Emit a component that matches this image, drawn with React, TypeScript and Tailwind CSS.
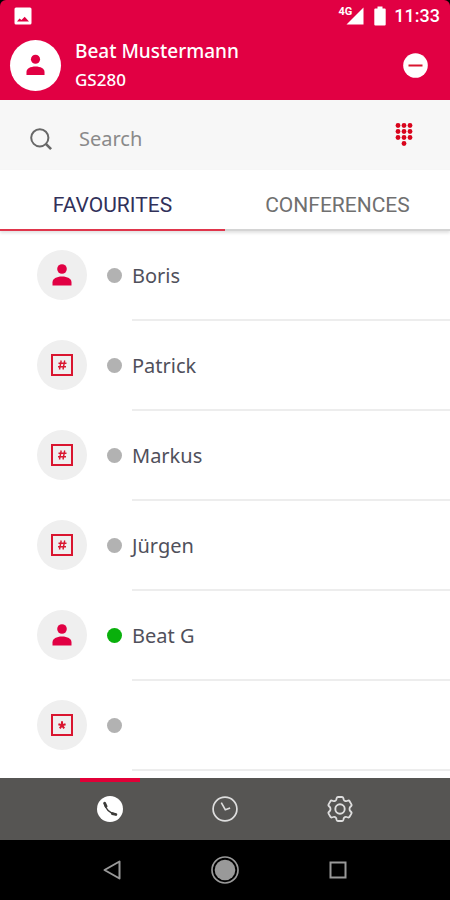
import { useState } from 'react';

type Contact = {
  id: number;
  name: string;
  kind: 'person' | 'hash' | 'star';
  online: boolean;
};

const contacts: Contact[] = [
  { id: 1, name: 'Boris', kind: 'person', online: false },
  { id: 2, name: 'Patrick', kind: 'hash', online: false },
  { id: 3, name: 'Markus', kind: 'hash', online: false },
  { id: 4, name: 'Jürgen', kind: 'hash', online: false },
  { id: 5, name: 'Beat G', kind: 'person', online: true },
  { id: 6, name: '', kind: 'star', online: false },
];

function PersonIcon({ className }: { className?: string }) {
  return (
    <svg viewBox="0 0 20 22" className={className} fill="currentColor" aria-hidden="true">
      <circle cx="10" cy="5" r="4.8" />
      <path d="M0.5 21.5v-3.2c0-3.6 4-5.8 9.500-5.800s9.500 2.200 9.500 5.800v3.200z" />
    </svg>
  );
}

function KeyIcon({ kind }: { kind: 'hash' | 'star' }) {
  return (
    <svg viewBox="0 0 22 22" className="h-[22px] w-[22px] text-[#d9152f]" fill="none" stroke="currentColor" aria-hidden="true">
      <rect x="1" y="1" width="20" height="20" strokeWidth="2" />
      {kind === 'hash' ? (
        <path d="M10.200 6.500l-1.700 9M13.700 6.500l-1.700 9M7.500 9.300h8M7 12.700h8" strokeWidth="1.400" />
      ) : (
        <path d="M11 7.300v4M7.400 10.200l3.600 1.100M14.600 10.200l-3.600 1.100M8.800 14.300l2.200-3M13.200 14.300l-2.200-3" strokeWidth="2" />
      )}
    </svg>
  );
}

function StatusBar() {
  return (
    <div className="flex h-8 items-center justify-between pl-[14px] pr-[10px]">
      <svg viewBox="0 0 18 18" className="h-[18px] w-[18px]" aria-hidden="true">
        <rect x="0.500" y="0.500" width="17" height="17" rx="1.500" fill="#fff" />
        <path d="M3 14.500l2.500-3 2 1.600 3.200-3.300 4.300 4.700z" fill="#e10043" />
      </svg>
      <div className="flex items-center text-white">
        <span className="-mr-[6px] self-start font-['Roboto'] text-[11px] font-bold leading-3">4G</span>
        <svg viewBox="0 0 18 18" className="h-[18px] w-[18px]" fill="currentColor" aria-hidden="true">
          <path d="M17.500 0.500v17h-17z" />
        </svg>
        <svg viewBox="0 0 12 20" className="ml-[10px] h-5 w-3" fill="currentColor" aria-hidden="true">
          <path d="M3.500 0.500h5v2h2.200q1 0 1 1v15q0 1-1 1h-9.400q-1 0-1-1v-15q0-1 1-1h2.200z" />
        </svg>
        <span className="ml-2 font-['Roboto'] text-[18px] font-medium leading-5">11:33</span>
      </div>
    </div>
  );
}

function Header() {
  return (
    <header className="bg-black">
      <div className="h-[100px] rounded-t-md bg-[#e10043]">
        <StatusBar />
        <div className="flex items-center pl-[10px] pr-[22px] pt-1">
          <div className="flex h-[51px] w-[51px] items-center justify-center rounded-full bg-white text-[#e10043]">
            <PersonIcon className="h-[22px] w-[19px]" />
          </div>
          <div className="ml-[14px] flex-1 text-white">
            <h1 className="text-[19px] font-medium leading-[30px]">Beat Mustermann</h1>
            <p className="text-[17px] font-medium leading-7">GS280</p>
          </div>
          <button type="button" aria-label="Status" className="h-[25px] w-[25px]">
            <svg viewBox="0 0 25 25" className="h-full w-full" aria-hidden="true">
              <circle cx="12.500" cy="12.500" r="12.300" fill="#fff" />
              <path d="M5.500 12.500h14" stroke="#d9152f" strokeWidth="2" />
            </svg>
          </button>
        </div>
      </div>
    </header>
  );
}

function SearchBar() {
  return (
    <div className="flex h-[70px] items-center bg-[#f7f7f7] pl-[30px] pr-9 pt-2">
      <svg viewBox="0 0 22 22" className="h-[22px] w-[22px] text-[#686868]" fill="none" stroke="currentColor" aria-hidden="true">
        <circle cx="9.800" cy="9.800" r="8.600" strokeWidth="2" />
        <path d="M15.800 15.800l5.300 5.300" strokeWidth="2.600" />
      </svg>
      <input
        type="search"
        aria-label="Search"
        placeholder="Search"
        className="ml-[27px] min-w-0 flex-1 bg-transparent text-[20px] leading-7 text-[#464650] outline-none placeholder:text-[#8a8a8a]"
      />
      <button type="button" aria-label="Dialpad" className="-mt-2 h-6 w-5">
        <svg viewBox="0 0 20 24" className="h-full w-full" fill="#d9041c" aria-hidden="true">
          {[2.5, 8.5, 14.5].map((y) =>
            [4, 10, 16].map((x) => <circle key={`${x}-${y}`} cx={x} cy={y} r="2.400" />)
          )}
          <circle cx="10" cy="20.500" r="2.400" />
        </svg>
      </button>
    </div>
  );
}

function ContactRow({ contact }: { contact: Contact }) {
  return (
    <li className="flex h-[90px] pl-[37px]">
      <div className="flex h-[88px] items-center">
        <div className="flex h-[50px] w-[50px] items-center justify-center rounded-full bg-[#efefef] text-[#e10043]">
          {contact.kind === 'person' ? <PersonIcon className="h-[22px] w-5" /> : <KeyIcon kind={contact.kind} />}
        </div>
        <span className={`ml-5 h-[15px] w-[15px] rounded-full ${contact.online ? 'bg-[#09b00c]' : 'bg-[#b2b2b2]'}`} />
      </div>
      <div className="ml-[10px] flex flex-1 items-center border-b-2 border-[#ededed] pt-[2px] text-[20px] leading-7 text-[#50505b]">
        {contact.name}
      </div>
    </li>
  );
}

function BottomBar() {
  return (
    <nav className="grid h-[62px] grid-cols-3 bg-[#565553] px-[52px] text-[#dedede]">
      <button type="button" aria-label="Calls" className="flex flex-col items-center">
        <span className="h-1 w-[60px] bg-[#e10037]" />
        <svg viewBox="0 0 26 26" className="mt-[14px] h-[26px] w-[26px]" aria-hidden="true">
          <circle cx="13" cy="13" r="13" fill="#fff" />
          <g fill="none" stroke="#3c3b39" strokeLinecap="round">
            <path d="M7.500 7.500c.6 5 5.200 10 11.500 11" strokeWidth="1.500" />
            <path d="M7.600 7.200l1.500 3.200M15.300 17.600l3.600.9" strokeWidth="2.800" />
          </g>
        </svg>
      </button>
      <button type="button" aria-label="History" className="flex items-center justify-center">
        <svg viewBox="0 0 26 26" className="h-[26px] w-[26px]" fill="none" stroke="currentColor" aria-hidden="true">
          <circle cx="13" cy="13" r="11.900" strokeWidth="1.700" />
          <path d="M9.300 6.700l4 7 4.800-1.800" strokeWidth="1.600" />
        </svg>
      </button>
      <button type="button" aria-label="Settings" className="flex items-center justify-center">
        <svg viewBox="0 0 26 26" className="h-[26px] w-[26px]" fill="none" stroke="currentColor" strokeLinejoin="round" aria-hidden="true">
          <path
            d="M11 1h4q1 0 1.300 1l.4 1.500q.3 1 1.200 1.400t1.800.1l1.400-.4q1-.3 1.500.6l1.800 3.200q.5.900-.2 1.600l-1 1q-.7.700-.7 2t.7 2l1 1q.7.700.2 1.600l-1.800 3.200q-.5.900-1.500.6l-1.400-.4q-.9-.3-1.800.1t-1.200 1.400l-.4 1.500q-.3 1-1.300 1h-4q-1 0-1.300-1l-.4-1.500q-.3-1-1.200-1.400t-1.800-.1l-1.400.4q-1 .3-1.500-.6l-1.800-3.200q-.5-.9.200-1.600l1-1q.7-.7.700-2t-.7-2l-1-1q-.7-.7-.2-1.600l1.800-3.200q.5-.9 1.500-.6l1.400.4q.9.300 1.800-.1t1.200-1.400l.4-1.500q.3-1 1.300-1z"
            strokeWidth="1.800"
          />
          <circle cx="13" cy="13" r="4.700" strokeWidth="1.900" />
        </svg>
      </button>
    </nav>
  );
}

function SystemNav() {
  return (
    <div className="grid h-[60px] grid-cols-3 items-center justify-items-center bg-black px-14 text-[#999]">
      <button type="button" aria-label="Back">
        <svg viewBox="0 0 18 20" className="h-5 w-[18px]" fill="none" stroke="currentColor" strokeWidth="2" strokeLinejoin="round" aria-hidden="true">
          <path d="M16.500 1.500v17l-15-8.500z" />
        </svg>
      </button>
      <button type="button" aria-label="Home">
        <svg viewBox="0 0 28 28" className="h-7 w-7" aria-hidden="true">
          <circle cx="14" cy="14" r="13" fill="none" stroke="currentColor" strokeWidth="1.700" />
          <circle cx="14" cy="14" r="10.300" fill="currentColor" />
        </svg>
      </button>
      <button type="button" aria-label="Recents">
        <svg viewBox="0 0 18 18" className="h-[18px] w-[18px]" fill="none" stroke="currentColor" strokeWidth="2" aria-hidden="true">
          <rect x="1.500" y="1.500" width="15" height="15" />
        </svg>
      </button>
    </div>
  );
}

export default function App() {
  const [activeTab, setActiveTab] = useState<'favourites' | 'conferences'>('favourites');

  return (
    <div className="flex min-h-screen flex-col bg-white font-['Noto_Sans',sans-serif]">
      <Header />
      <SearchBar />

      {/* Tabs */}
      <div role="tablist" className="flex h-[61px] font-['Roboto',sans-serif] text-[21px] shadow-[0_2px_3px_rgba(0,0,0,0.12)]">
        <button
          type="button"
          role="tab"
          aria-selected={activeTab === 'favourites'}
          onClick={() => setActiveTab('favourites')}
          className={`flex-1 border-b-2 pt-3 ${activeTab === 'favourites' ? 'border-[#e0354b] text-[#31315a]' : 'border-[#d4d4d4] text-[#707070]'}`}
        >
          FAVOURITES
        </button>
        <button
          type="button"
          role="tab"
          aria-selected={activeTab === 'conferences'}
          onClick={() => setActiveTab('conferences')}
          className={`flex-1 border-b-2 pt-3 ${activeTab === 'conferences' ? 'border-[#e0354b] text-[#31315a]' : 'border-[#d4d4d4] text-[#707070]'}`}
        >
          CONFERENCES
        </button>
      </div>

      {/* List */}
      <main className="flex-1 pb-[7px]">
        {activeTab === 'favourites' && (
          <ul>
            {contacts.map((contact) => (
              <ContactRow key={contact.id} contact={contact} />
            ))}
          </ul>
        )}
      </main>

      <BottomBar />
      <SystemNav />
    </div>
  );
}
